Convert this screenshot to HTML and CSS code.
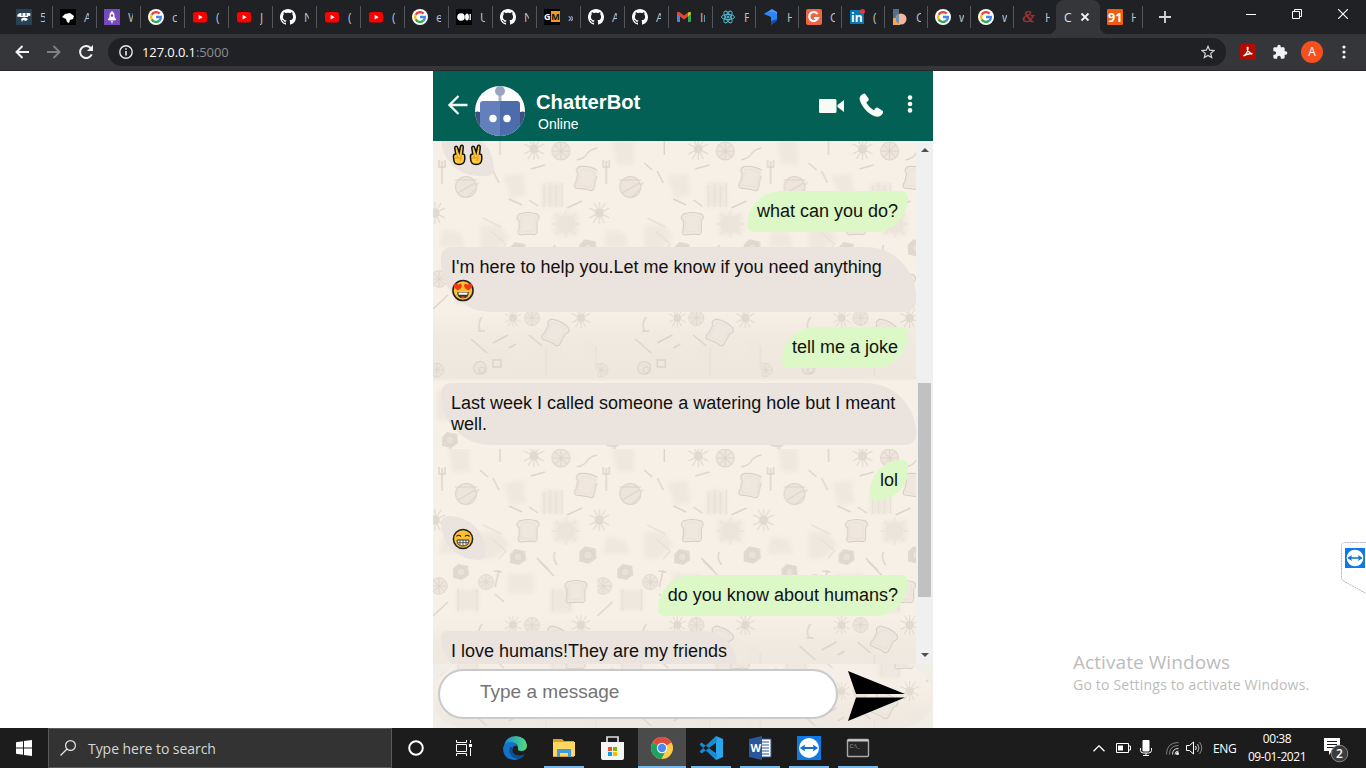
FILE: index.html
```html
<!DOCTYPE html>
<html lang="en">
<head>
<meta charset="utf-8">
<title>ChatterBot</title>
<link rel="stylesheet" href="styles.css">
</head>
<body>
<svg class="defs" width="0" height="0" aria-hidden="true">
  <defs>
    <symbol id="google" viewBox="0 0 16 16"><circle cx="8" cy="8" r="8" fill="#fff"/><g fill="none" stroke-width="2.3"><path d="M11.6 4.6A4.9 4.9 0 0 0 3.7 5.7" stroke="#ea4335"/><path d="M3.7 5.7a4.9 4.9 0 0 0 0 4.7" stroke="#fbbc05"/><path d="M3.7 10.4a4.9 4.9 0 0 0 7.6 1.3" stroke="#34a853"/><path d="M11.3 11.7A4.9 4.9 0 0 0 12.900 8H8" stroke="#4285f4"/></g></symbol>
    <symbol id="youtube" viewBox="0 0 16 16"><rect x="1" y="3" width="14" height="10.5" rx="2.5" fill="#f00"/><path d="M6.600 5.800v4.800L10.600 8.200z" fill="#fff"/></symbol>
    <symbol id="github" viewBox="0 0 16 16"><path fill="#fff" d="M8 0C3.58 0 0 3.58 0 8c0 3.54 2.29 6.53 5.47 7.59.4.07.55-.17.55-.38 0-.19-.01-.82-.01-1.49-2.01.37-2.53-.49-2.69-.94-.09-.23-.48-.94-.82-1.13-.28-.15-.68-.52-.01-.53.63-.01 1.08.58 1.23.82.72 1.21 1.87.87 2.33.66.07-.52.28-.87.51-1.07-1.78-.2-3.64-.89-3.64-3.95 0-.87.31-1.59.82-2.15-.08-.2-.36-1.02.08-2.12 0 0 .67-.21 2.2.82.64-.18 1.32-.27 2-.27.68 0 1.36.09 2 .27 1.53-1.04 2.2-.82 2.2-.82.44 1.1.16 1.92.08 2.12.51.56.82 1.27.82 2.15 0 3.07-1.87 3.75-3.65 3.95.29.25.54.73.54 1.48 0 1.07-.01 1.93-.01 2.2 0 .21.15.46.55.38A8.013 8.013 0 0016 8c0-4.42-3.58-8-8-8z"/></symbol>
    <symbol id="teamviewer" viewBox="0 0 24 24"><rect width="24" height="24" fill="#0f7ae5"/><circle cx="12" cy="12" r="10" fill="#fff"/><path d="M2.800 12l5.500-3.600-.8 2.700h9l-.8-2.700 5.500 3.600-5.500 3.600.8-2.700h-9l.8 2.700z" fill="#0d6fd2"/></symbol>
    <symbol id="sun" viewBox="-12 -12 24 24" overflow="visible"><circle r="4.500" fill="#ddd4ca"/><path d="M0-11V11M-10-5 10 5M-10 5 10-5M-5-10 5 10M-6 10 6-10" stroke="#ded6cc" stroke-width="1.200"/></symbol>
    <symbol id="lemon" viewBox="-12 -12 24 24" overflow="visible"><circle r="9" fill="#ece4db" stroke="#d9d0c6"/><path d="M-8 0H8M0-8V8M-6-6 6 6M-6 6 6-6" stroke="#d9d0c6"/></symbol>
    <symbol id="bread" viewBox="-12 -12 24 24" overflow="visible"><path d="M-9-10Q0-13 9-10Q13-7 9-3L9 8Q8 12 3 10L-8 11Q-11 10-9 5L-9-3Q-13-6-9-10Z" fill="#efe7de" stroke="#d0c7bd"/><path d="M-7-7Q0-10 7-7L6 7-7 8Z" fill="none" stroke="#e8e0d6"/></symbol>
    <symbol id="pot" viewBox="-12 -12 24 24" overflow="visible"><path d="M-8-3-3-8 7-6 8 3 1 8-8 6Z" fill="#ddd5cc"/><circle r="4" fill="#e6ded5" stroke="#d7cec5"/></symbol>
    <filter id="haze" x="-10%" y="-10%" width="120%" height="120%"><feGaussianBlur stdDeviation="2"/></filter>
    <filter id="soft" x="-10%" y="-10%" width="120%" height="120%"><feGaussianBlur stdDeviation=".35"/></filter>
    <linearGradient id="band" x2="0" y2="1"><stop stop-color="#f7f0e7"/><stop offset=".35" stop-color="#f1eae1"/><stop offset="1" stop-color="#eee7de"/></linearGradient>
    <pattern id="food" width="164.300" height="307" patternUnits="userSpaceOnUse">
      <rect width="165" height="307" fill="#f7f0e7"/>
      <rect y="170" width="165" height="68" fill="url(#band)"/>
      <rect y="238" width="165" height="2" fill="#f3ece3"/>
      <g fill="#efe8df" filter="url(#haze)">
        <path d="M15 0h22v24H20zM70 35l20-3 3 22-15 4zM109 42h20v24h-20zM47 84h20l9 13-15 14H47zM10 88l18 4 4 14H6zM23 141h23v22H23zM117 141h22v24h-22zM121 72h24v22h-24zM75 125h26v20H75zM55 208h24v20H55zM150 198h12v26h-12zM100 205h30v22h-30zM4 250h16v30H4z"/>
      </g>
      <g opacity=".85" filter="url(#soft)">
      <use href="#sun" x="89" y="-4" width="24" height="24"/>
      <use href="#lemon" x="116" y="-2" width="24" height="24"/>
      <use href="#bread" x="141" y="25" width="25" height="25" transform="rotate(12 153 37)"/>
      <g stroke="#d9d0c6" stroke-width="1.500" fill="none">
        <path d="M144 19q8-2 10-6t10-6M9 20v23M6 19v7h6v-7M98 28l14-4M47 22l8 7M60 30l6 12M67 0v14M76 58l13 6M96 59l9 6M134 67l15-7M104 110l12 12M122 104q-3 5 2 13M106 113l15 15M0 168l15-14M66 122l-4 17M61 123l8 1M62 146l9 8M49 176q-5 6-2 14M45 190h7M38 198l16 14M60 202l15-8M76 207l7-4M96 194l13 11M60 219h8v7h-8z"/>
        <path d="M113 207v28M3 222v9M59 91l14 12-7 8M50 77l18 9M111 44v22M117 42v24M123 44v22M129 42v24M25 141v22M44 141v22M120 141v22M137 143v20M163 205v24" stroke="#e7dfd6"/>
      </g>
      <g fill="#ebe3da" stroke="#d8cfc5"><circle cx="33" cy="46" r="10.500"/><path d="M22 39h22M25 52l17-10M34 56l9-8M43 45l3-4" fill="none"/><circle cx="47" cy="227" r="6.500"/><circle cx="49" cy="229" r="3"/></g>
      <use href="#sun" x="-10" y="60" width="24" height="24"/><use href="#sun" x="154.300" y="60" width="24" height="24"/>
      <use href="#bread" x="83" y="71" width="24" height="24"/>
      <circle cx="133" cy="83" r="9" fill="#ebe3da"/><path d="M133 69v28M119 83h28M123 73l20 20M123 93l20-20" stroke="#ece4db" stroke-width="2"/>
      <use href="#pot" x="73" y="97" width="24" height="24"/><use href="#pot" x="142" y="94" width="26" height="26"/>
      <use href="#pot" x="16" y="112" width="24" height="24"/>
      <use href="#lemon" x="43" y="124" width="20" height="20"/><use href="#lemon" x="-5" y="127" width="22" height="22"/>
      <use href="#bread" x="131" y="132" width="24" height="24"/>
      <use href="#sun" x="70" y="167" width="20" height="20"/><use href="#lemon" x="89" y="167" width="20" height="20"/><use href="#sun" x="137" y="166" width="22" height="22"/>
      <use href="#bread" x="110" y="179" width="25" height="25" transform="rotate(28 122 191)"/>
      <use href="#lemon" x="-5" y="220" width="18" height="18"/><use href="#pot" x="5" y="287" width="24" height="24"/>
      <use href="#sun" x="70" y="250" width="22" height="22"/><use href="#lemon" x="110" y="275" width="22" height="22"/>
      </g>
    </pattern>
  </defs>
</svg>

<header class="browser">
  <div class="tabstrip">
    <div class="tab first"><svg viewBox="0 0 16 16"><rect width="16" height="16" rx="1" fill="#2b4254"/><path d="M1 7q1-3 4-3h9q1 2 0 3-2-1-2 1H4q-1-1-2 0zM5 10q3-3 7 0l-2 2-3-1-1 2zM3 8l-1 2" fill="#fff"/><path d="M6 3v4M10 3v4" stroke="#2b4254"/></svg><span>5</span></div>
    <div class="tab"><svg viewBox="0 0 16 16"><path d="M0 0h16v16H0z"/><path d="M2 8l3-3 5-1 4 3-1 3-3 1-1 3-2-1-1-3z" fill="#fff"/></svg><span>A</span></div>
    <div class="tab"><svg viewBox="0 0 16 16"><path d="M0 0h16v16H0z" fill="#744abd"/><path d="M8 2q3 2 2.500 6l2 3-2.500.5H6L3.500 11l2-3Q5 4 8 2zM7 12h2l-1 3z" fill="#fff"/><circle cx="8" cy="6.500" r="1.200" fill="#744abd"/></svg><span>W</span></div>
    <div class="tab"><svg><use href="#google"/></svg><span>c</span></div>
    <div class="tab"><svg><use href="#youtube"/></svg><span>(</span></div>
    <div class="tab"><svg><use href="#youtube"/></svg><span>J</span></div>
    <div class="tab"><svg><use href="#github"/></svg><span>N</span></div>
    <div class="tab"><svg><use href="#youtube"/></svg><span>(</span></div>
    <div class="tab"><svg><use href="#youtube"/></svg><span>(</span></div>
    <div class="tab"><svg><use href="#google"/></svg><span>e</span></div>
    <div class="tab"><svg viewBox="0 0 16 16"><path d="M0 0h16v16H0z"/><circle cx="5" cy="8" r="3.800" fill="#fff"/><ellipse cx="11" cy="8" rx="1.900" ry="3.600" fill="#fff"/><path d="M14.200 5v6" stroke="#fff" stroke-width="1.300"/></svg><span>U</span></div>
    <div class="tab"><svg><use href="#github"/></svg><span>N</span></div>
    <div class="tab"><svg viewBox="0 0 16 16"><path d="M0 0h16v16H0z"/><path d="M7 2h9v11H7z" fill="#f79a1c"/><text x="0" y="11" font-size="9" font-weight="700" fill="#fff">G</text><text x="7.300" y="11" font-size="9" font-weight="700" fill="#111">M</text></svg><span>»</span></div>
    <div class="tab"><svg><use href="#github"/></svg><span>A</span></div>
    <div class="tab"><svg><use href="#github"/></svg><span>A</span></div>
    <div class="tab"><svg viewBox="0 0 16 16"><path d="M1 3.500h3V13H2q-1 0-1-1z" fill="#4285f4"/><path d="M12 3.500h3V12q0 1-1 1h-2z" fill="#34a853"/><path d="M1 4q1-2 3-.5L8 6.500l4-3 0 4L8 10.500 4 7.500 1 5z" fill="#ea4335"/><path d="M12 3.500q3-1.500 3 1L12 7.500z" fill="#fbbc04"/></svg><span>Ir</span></div>
    <div class="tab narrow"><svg viewBox="0 0 16 16" fill="none" stroke="#4fb8cf"><ellipse cx="8" cy="8" rx="6.500" ry="2.600"/><ellipse cx="8" cy="8" rx="6.500" ry="2.600" transform="rotate(60 8 8)"/><ellipse cx="8" cy="8" rx="6.500" ry="2.600" transform="rotate(120 8 8)"/><circle cx="8" cy="8" r="1" fill="#4fb8cf"/></svg><span>F</span></div>
    <div class="tab narrow"><svg viewBox="0 0 16 16"><path d="M1 5L9 0l5 3v8l-5-5z" fill="#4a9cff"/><path d="M1 5l3-2h7l3 2v6l-6 5V8z" fill="#2f83f2"/><path d="M14 10v2l-6 4v-4z" fill="#0d52b8"/></svg><span>H</span></div>
    <div class="tab narrow"><svg viewBox="0 0 16 16"><rect width="16" height="16" rx="2" fill="#ee6544"/><path d="M11.500 5A4.500 4.500 0 1 0 12 9H8" fill="none" stroke="#fff" stroke-width="2.200"/></svg><span>C</span></div>
    <div class="tab narrow"><svg viewBox="0 0 16 16"><rect x="1" y="1" width="14" height="14" fill="#0877b5"/><text x="2" y="12.500" font-size="12" font-weight="700" fill="#fff">in</text><circle cx="13.500" cy="2.500" r="2.500" fill="#e53935"/></svg><span>(</span></div>
    <div class="tab narrow"><svg viewBox="0 0 16 16"><path d="M1 0h6v9H1z" fill="#56708a"/><path d="M1 9h7v7H1z" fill="#f6a942"/><circle cx="9" cy="10" r="5.500" fill="#f3b7a0"/><path d="M7 5A5.500 5.500 0 0 0 7 15z" fill="#6f92b5"/></svg><span>C</span></div>
    <div class="tab narrow"><svg><use href="#google"/></svg><span>w</span></div>
    <div class="tab narrow"><svg><use href="#google"/></svg><span>w</span></div>
    <div class="tab narrow last"><svg viewBox="0 0 16 16"><text x="1" y="13" class="amp" font-size="16" fill="#9b3138" stroke="#9b3138" stroke-width=".5">&amp;</text></svg><span>H</span></div>
    <div class="tab active"><span>C</span><svg class="x" viewBox="0 0 10 10"><path d="M1.500 1.500l7 7m0-7l-7 7" stroke="#f1f1f1" stroke-width="1.800"/></svg></div>
    <div class="tab narrow after"><svg viewBox="0 0 16 16"><rect width="16" height="16" rx="1" fill="#f05d0c"/><text x="1" y="12.500" font-size="12.500" font-weight="700" fill="#fff">91</text></svg><span>H</span></div>
    <svg class="plus" viewBox="0 0 12 12"><path d="M6 0v12M0 6h12" stroke="#d5d6d8" stroke-width="1.800"/></svg>
    <div class="window-buttons">
      <svg viewBox="0 0 10 10"><path d="M0 5.500h10" stroke="#fff"/></svg>
      <svg viewBox="0 0 10 10" fill="none" stroke="#fff"><path d="M.5 2.500h7v7h-7zM2.500 2.500v-2h7v7h-2"/></svg>
      <svg viewBox="0 0 10 10"><path d="M0 0l10 10M10 0L0 10" stroke="#fff" stroke-width="1.100"/></svg>
    </div>
  </div>
  <div class="toolbar">
    <svg class="nav" viewBox="0 0 14 14" fill="none" stroke="#f1f3f4" stroke-width="1.900"><path d="M14 7H1.500M7.500 1L1.500 7l6 6"/></svg>
    <svg class="nav" viewBox="0 0 14 14" fill="none" stroke="#7e8084" stroke-width="1.900"><path d="M0 7h12.500M6.500 1l6 6-6 6"/></svg>
    <svg class="nav" viewBox="0 0 14 14" fill="none" stroke="#f1f3f4" stroke-width="2"><path d="M12.700 9.300A6 6 0 1 1 11.600 3"/><path d="M14 0v6H8z" fill="#f1f3f4" stroke="none"/></svg>
    <div class="omnibox">
      <svg class="info" viewBox="0 0 14 14"><circle cx="7" cy="7" r="6.200" fill="none" stroke="#e8eaed" stroke-width="1.400"/><path d="M7 6v4.500M7 3.300v1.500" stroke="#e8eaed" stroke-width="1.600"/></svg>
      <span class="url">127.0.0.1<i>:5000</i></span>
      <svg class="star" viewBox="0 0 14 14"><path d="M7 1.300l1.700 3.900 4.200.4-3.200 2.800 1 4.200L7 10.400l-3.700 2.200 1-4.200L1.100 5.600l4.200-.4z" fill="none" stroke="#d2d4d7" stroke-width="1.200"/></svg>
    </div>
    <svg class="pdf" viewBox="0 0 16 16"><rect width="16" height="16" rx="2" fill="#b30b00"/><path d="M3.500 12Q8 9 8 4q0-1-.8-.5Q7 8 12.500 10 9 9 3.500 12" fill="none" stroke="#fff" stroke-width="1.300"/></svg>
    <svg class="puzzle" viewBox="0 0 24 24"><path fill="#f1f3f4" d="M20.500 11H19V7c0-1.100-.9-2-2-2h-4V3.500a2.500 2.500 0 0 0-5 0V5H4c-1.100 0-2 .9-2 2v3.800h1.500a2.700 2.700 0 0 1 0 5.400H2V20c0 1.100.9 2 2 2h3.800v-1.500a2.700 2.700 0 0 1 5.400 0V22H17c1.100 0 2-.9 2-2v-4h1.500a2.500 2.500 0 0 0 0-5z"/></svg>
    <span class="profile">A</span>
    <svg class="kebab" viewBox="0 0 4 14" fill="#f1f3f4"><circle cx="2" cy="2" r="1.600"/><circle cx="2" cy="7" r="1.600"/><circle cx="2" cy="12" r="1.600"/></svg>
  </div>
</header>

<main class="page">
  <section class="chat">
    <div class="chat-head">
      <svg class="back" viewBox="0 0 20 20" fill="none" stroke="#eef7f0" stroke-width="2.300"><path d="M19.500 10H1.500M10.500 1l-9 9 9 9"/></svg>
      <svg class="avatar" viewBox="0 0 50 50"><clipPath id="round"><circle cx="25" cy="25" r="25"/></clipPath><g clip-path="url(#round)"><path d="M0 0h50v50H0z" fill="#fff"/><path d="M23.500 8h3v9h-3z" fill="#aab3c9"/><circle cx="25" cy="5" r="5" fill="#99a5c0"/><path d="M0 26q2-1 5 0v18H0zM45 26q3-1 5 0v18h-5z" fill="#3c4f7f"/><path d="M8 15h17v35H5V18q0-3 3-3z" fill="#6380bc"/><path d="M25 15h17q3 0 3 3v32H25z" fill="#4c6cac"/><circle cx="18" cy="32.500" r="3.700" fill="#fff"/><circle cx="32" cy="32.500" r="3.700" fill="#fff"/></g></svg>
      <div class="who"><h1>ChatterBot</h1><p>Online</p></div>
      <svg class="video" viewBox="0 0 25 14"><path fill="#f7fdf6" d="M1 0h15q1.500 0 1.500 1.500v11q0 1.500-1.500 1.500H1q-1 0-1-1V1q0-1 1-1zM18.500 6L25 1v12l-6.500-5z"/></svg>
      <svg class="phone" viewBox="0 0 24 24"><path fill="#f7fdf6" d="M4.500.8Q5.500 0 6.300 1L9.500 5.500q.8 1.500-.5 2.500L7.800 9q-.5.600 0 1.500 2.500 4 6.200 6.200.8.500 1.500-.2l1.200-1.500q1-1 2.200-.2l4.600 3q1.300.8.600 2-2 4-6 3.900-5-.3-10.500-5.700T.5 6Q.4 3 4.500.8z"/></svg>
      <svg class="menu" viewBox="0 0 6 18" fill="#f7fdf6"><circle cx="3" cy="2.600" r="2.300"/><circle cx="3" cy="9" r="2.300"/><circle cx="3" cy="15.400" r="2.300"/></svg>
    </div>
    <div class="conversation">
      <svg class="wallpaper"><rect width="100%" height="100%" fill="url(#food)"/></svg>
      <div class="messages">
        <div class="bubble in peace"><svg viewBox="0 0 16 22"><path id="hand" d="M4.500 10L3.500 4q0-1.800 1.300-1.800T6.500 4L8 8.500l1.200-6q.4-1.500 1.700-1.200t1.100 2L11.300 10q2.200-.2 2.200 2.500v3q-.5 5-5.500 5-5 0-5.500-4.500l-.3-3.500q0-2.500 2.300-2.500z" fill="#ffc83d" stroke="#111" stroke-width="1.500"/><path id="folds" d="M3.500 14H8q2 0 2-3M6 11v3M8.500 17q0-3 2.500-3" fill="none" stroke="#e08f10" stroke-width=".9"/></svg><svg viewBox="0 0 16 22"><use href="#hand"/><use href="#folds"/></svg></div>
        <div class="bubble out">what can you do?</div>
        <div class="bubble in wide love">I'm here to help you.Let me know if you need anything <svg viewBox="0 0 22 22"><circle cx="11" cy="11" r="9.600" fill="#ffc12f" stroke="#222" stroke-width="1.500"/><path d="M6 11Q0 7 2.500 5 5 3.500 6.500 5.500 9 3.500 10 6 10 9 6 11zM16 11q-4-2-4-5 1-2.500 3.500-.5Q17 3.500 19.500 5 22 7 16 11z" fill="#f03a17"/><path d="M5.500 12.500h11q0 6-5.500 6t-5.500-6z" fill="#333"/><path d="M6.500 13h9l-.5 2H7z" fill="#fff"/><path d="M8.500 17.500q2.500-2 5 0-2.500 1.500-5 0z" fill="#f03a17"/></svg></div>
        <div class="bubble out">tell me a joke</div>
        <div class="bubble in wide">Last week I called someone a watering hole but I meant well.</div>
        <div class="bubble out">lol</div>
        <div class="bubble in grin"><svg viewBox="0 0 22 22"><circle cx="11" cy="11" r="9.600" fill="#ffc12f" stroke="#222" stroke-width="1.500"/><path d="M4.500 8.500q2-2.500 4.500 0M13 8.500q2-2.500 4.500 0" fill="none" stroke="#222" stroke-width="1.200"/><path d="M5 12h12q0 6-6 6t-6-6z" fill="#fff" stroke="#333"/><path d="M5.500 14.700h11M8 12v5M11 12v6M14 12v5" stroke="#333" stroke-width=".8"/></svg></div>
        <div class="bubble out">do you know about humans?</div>
        <div class="bubble in">I love humans!They are my friends</div>
      </div>
      <div class="scrollbar"><i class="up"></i><i class="thumb"></i><i class="down"></i></div>
    </div>
    <form class="composer">
      <svg class="wallpaper" viewBox="0 150 500 64"><rect y="150" width="500" height="64" fill="url(#food)"/></svg>
      <input type="text" placeholder="Type a message" aria-label="Message">
      <svg class="send" viewBox="0 0 58 50"><path d="M0 0l57 23H8zM0 50l57-23.500H8z"/></svg>
    </form>
  </section>
  <aside class="activate"><strong>Activate Windows</strong><span>Go to Settings to activate Windows.</span></aside>
  <svg class="tv-flap" viewBox="0 0 26 54"><path d="M26 .5H4q-3.500 0-3.500 4V35q0 3 3 4.500L26 52" fill="#fff" stroke="#b4b6c4" stroke-dasharray="2 .6"/><svg x="4" y="6" width="20" height="20"><use href="#teamviewer"/></svg></svg>
</main>

<footer class="taskbar">
  <div class="start"><svg viewBox="0 0 16 16" fill="#fff"><path d="M0 2.200l7-1v6.300H0zM8 1l8-1v7.500H8zM0 8.500h7v6.300l-7-1zM8 8.500h8V16l-8-1z"/></svg></div>
  <div class="search"><svg viewBox="0 0 16 16" fill="none" stroke="#e6e6e6" stroke-width="1.200"><circle cx="10.500" cy="5.500" r="4.900"/><path d="M7 9L.5 15.500"/></svg><span>Type here to search</span></div>
  <div class="sys"><svg viewBox="0 0 16 16"><circle cx="8" cy="8" r="6.800" fill="none" stroke="#fff" stroke-width="2"/></svg></div>
  <div class="sys"><svg viewBox="0 0 16 16" fill="none" stroke="#fff"><path d="M.5 0v2.500h10V0M.5 16v-2.500h10V16M.5 4.500h10v7H.5zM14.500 0v3M14.500 8v8"/><path d="M13 4h3v3h-3z" fill="#fff" stroke="none"/></svg></div>
  <div class="apps">
    <div class="app"><svg viewBox="0 0 24 24"><defs><linearGradient id="edge"><stop stop-color="#168dda"/><stop offset="1" stop-color="#55dc7c"/></linearGradient></defs><path d="M1 10Q3 0 13 0q10 1 11 9 0 6-6 6-4 0-3-3 0-5-6-5-5 0-8 3z" fill="url(#edge)"/><path d="M0 12Q2 5 9 6q5 1 6 6-1-3-4-2-4 4 0 8 5 4 11 0-5 6-11 6Q0 23 0 12z" fill="#1273c6"/><path d="M7 11q-3 9 7 12 5 0 8-5-5 3-11 0-3-3-1-7z" fill="#0c4d98"/></svg></div>
    <div class="app open"><svg viewBox="0 0 24 24"><path d="M1 3h9l2 2h10v16H1z" fill="#e2a11c"/><path d="M1 6h22v14H1z" fill="#ffd75e"/><path d="M5 13h14v8h-3v-4H8v4H5z" fill="#3f9bdc"/></svg></div>
    <div class="app"><svg viewBox="0 0 24 24"><path d="M6 8V1h11v7" fill="none" stroke="#ddd" stroke-width="1.700"/><path d="M0 6h23v16q0 2-2 2H2q-2 0-2-2z" fill="#f5f5f5"/><path d="M7 11h4v4H7z" fill="#f25022"/><path d="M12 11h4v4h-4z" fill="#7fba00"/><path d="M7 16h4v4H7z" fill="#00a4ef"/><path d="M12 16h4v4h-4z" fill="#ffb900"/></svg></div>
    <div class="app open current"><svg viewBox="0 0 24 24"><circle cx="12" cy="12" r="11" fill="#ffcd41"/><path d="M12 12L2.500 6.500a11 11 0 0 1 19 0z" fill="#dd4b3e"/><path d="M2.500 6.500A11 11 0 0 0 11.500 23L16 14l-4-2z" fill="#1da260"/><circle cx="12" cy="12" r="5.200" fill="#fff"/><circle cx="12" cy="12" r="4.200" fill="#4c8bf5"/></svg></div>
    <div class="app open"><svg viewBox="0 0 24 24"><path d="M17 0l7 3v18l-7 3z" fill="#29a6ee"/><path d="M17 0L.5 15.500l2 2L18 6zM17 24L.5 8.500l2-2L18 18z" fill="#168bd3"/></svg></div>
    <div class="app open"><svg viewBox="0 0 24 24"><path d="M13 3h10v18H13z" fill="#fff" stroke="#2b579a"/><path d="M14 6h7M14 9h7M14 12h7M14 15h7M14 18h7" stroke="#2b579a"/><path d="M1 3l13-3v24L1 21z" fill="#2b579a"/><text x="2.500" y="16" font-size="11" font-weight="700" fill="#fff">W</text></svg></div>
    <div class="app open"><svg><use href="#teamviewer"/></svg></div>
    <div class="app open"><svg viewBox="0 0 24 24"><rect x="1.500" y="3.500" width="21" height="17" rx="1" fill="#242424" stroke="#a9a9a9" stroke-width="1.400"/><path d="M2 4.500h20" stroke="#ccc" stroke-width="2"/><text x="3.500" y="12" font-size="6" fill="#aaa">C:\_</text></svg></div>
  </div>
  <div class="tray">
    <svg class="chev" viewBox="0 0 12 7" fill="none" stroke="#fff" stroke-width="1.300"><path d="M.5 6.300L6 .8l5.500 5.500"/></svg>
    <svg class="battery" viewBox="0 0 15 10"><path d="M.5.5h12v9H.5zM13 3h1.500v4H13" fill="none" stroke="#fff"/><path d="M2 2.500h5v5H2z" fill="#fff"/></svg>
    <svg class="mic" viewBox="0 0 12 16"><rect x="2.500" width="7" height="11.500" rx="1" fill="#fff"/><path d="M.5 8v2.500q0 2.500 3 2.500h5q3 0 3-2.500V8M6 13v2.500M3 15.500h6" fill="none" stroke="#fff"/></svg>
    <svg class="wifi" viewBox="0 0 13 13" fill="none"><path d="M.5 12.500q0-12 12-12M3.500 12.500q0-9 9-9" stroke="#828282"/><path d="M6.500 12.500q0-6 6-6M9 12.500Q9 9 12.500 9" stroke="#ddd"/><circle cx="11.500" cy="11.500" r="1.500" fill="#fff"/></svg>
    <svg class="sound" viewBox="0 0 17 14" fill="none" stroke="#fff"><path d="M.5 4.500h3L7.500 1v12l-4-3.500h-3zM9.500 5q1.500 2 0 4"/><path d="M11.500 3q3 4 0 8" stroke="#bbb"/><path d="M13.500 1q4.500 6 0 12" stroke="#888"/></svg>
    <span class="lang">ENG</span>
    <div class="clock"><span>00:38</span><span>09-01-2021</span></div>
    <svg class="notice" viewBox="0 0 25 25"><path d="M0 0h16v13H8l-3 4v-4H0z" fill="#fff"/><path d="M3 3.500h10M3 6.500h10M3 9.500h7" stroke="#1c1c1c"/><circle cx="15.500" cy="15.500" r="8.300" fill="#3c3c3c" stroke="#888"/><text x="12" y="20" font-size="12" font-weight="600" fill="#fff">2</text></svg>
  </div>
</footer>
</body>
</html>
```
FILE: styles.css
```css
* { box-sizing: border-box; }
html, body { margin: 0; }
body {
  width: 1366px; height: 768px; overflow: hidden;
  display: flex; flex-direction: column;
  background: #fff;
  font-family: "Open Sans", "Noto Sans", sans-serif;
}
svg { display: block; flex: none; }
.defs { position: absolute; }

/* Browser chrome */
.browser { flex: none; height: 71px; background: #35363a; border-bottom: 1px solid #2a2829; }
.tabstrip { display: flex; height: 34px; background: #202124; font-size: 12px; color: #b4c2ce; }
.tab { position: relative; display: flex; align-items: center; gap: 8px; width: 44px; padding-left: 7px; border-right: 1px solid #55575b; border-image: linear-gradient(transparent 7px, #55575b 7px 27px, transparent 27px) 1; flex: none; }
.tab.first { width: 53px; padding-left: 16px; }
.tab.narrow { width: 43px; }
.tab.narrow.last { border: 0; width: 42px; }
.tab > svg { width: 16px; height: 16px; }
.tab span { width: 5px; overflow: hidden; white-space: nowrap; }
.tab.active { background: #35363a; border: 0; border-radius: 8px 8px 0 0; padding-left: 8px; gap: 8px; color: #dfe5ea; }
.tab.active::before, .tab.active::after { content: ""; position: absolute; bottom: 0; width: 8px; height: 8px; }
.tab.active::before { left: -8px; background: radial-gradient(circle at 0 0, #202124 8px, #35363a 8.500px); }
.tab.active::after { right: -8px; background: radial-gradient(circle at 100% 0, #202124 8px, #35363a 8.500px); }
.tab.active span { width: 8px; }
.tab .x { width: 10px; height: 10px; }
.amp { font-family: "Liberation Serif", serif; font-style: italic; }
.plus { width: 12px; height: 12px; margin: 11px 0 0 16px; }
.window-buttons { display: flex; gap: 36px; margin: 9px 18px 0 auto; }
.window-buttons svg { width: 10px; height: 10px; }
.toolbar { display: flex; align-items: center; height: 36px; padding-left: 15px; }
.nav { width: 14px; height: 14px; margin-right: 18px; }
.omnibox { display: flex; align-items: center; width: 1118px; height: 28px; padding: 0 11px; margin-left: -3px; border-radius: 14px; background: #202124; }
.info { width: 14px; height: 14px; margin-right: 9px; }
.url { font-size: 13px; letter-spacing: -.1px; color: #fff; }
.url i { font-style: normal; color: #8b8e92; }
.star { width: 14px; height: 14px; margin-left: auto; }
.pdf { width: 16px; height: 16px; margin-left: 14px; }
.puzzle { width: 16px; height: 16px; margin-left: 16px; }
.profile { width: 22px; height: 22px; margin-left: 13px; border-radius: 50%; background: #f4511e; color: #fff; font-size: 12px; line-height: 22px; text-align: center; }
.kebab { width: 4px; height: 14px; margin-left: 19px; }

/* Chat page */
.page { position: relative; flex: 1; min-height: 0; display: flex; justify-content: center; font-family: "Liberation Sans", Arial, sans-serif; }
.chat { display: flex; flex-direction: column; width: 500px; height: 657px; }
.chat-head { display: flex; align-items: flex-start; height: 70px; background: #036055; color: #fff; padding: 15px 20px 0 15px; }
.back { width: 20px; height: 20px; margin-top: 9px; }
.avatar { width: 50px; height: 50px; margin-left: 7px; }
.who { margin: 4px auto 0 11px; }
.who h1 { margin: 0; font-size: 20.200px; line-height: 24px; }
.who p { margin: 0 0 0 2px; font-size: 14px; line-height: 20px; }
.video { width: 25px; height: 14px; margin-top: 13px; }
.phone { width: 24px; height: 24px; margin: 7px 24px 0 15px; }
.menu { width: 6px; height: 18px; margin-top: 9px; }
.conversation { position: relative; display: flex; height: 523px; overflow: hidden; }
.wallpaper { position: absolute; inset: 0; width: 100%; height: 100%; }
.messages { position: relative; flex: 1; display: flex; flex-direction: column; align-items: flex-start; gap: 15px; height: 523px; overflow: hidden; padding-left: 8px; }
.bubble { flex: none; padding: 10px; color: #111; font-size: 18px; line-height: 21px; white-space: nowrap; }
.in { background: #ebe4de; border-radius: 10px 50px 10px 50px; }
.out { align-self: flex-end; margin-right: 8px; background: #dcf8c6; border-radius: 50px 10px 50px 10px; }
.wide { width: 475px; height: 62px; white-space: normal; }
.peace { display: flex; width: 53px; height: 45px; margin-top: -10px; padding-top: 13px; }
.peace svg { width: 16.500px; height: 22px; }
.love { height: 65px; }
.love svg { width: 24px; height: 23px; margin-top: 1px; }
.grin { width: 45px; height: 44px; padding-top: 12px; }
.grin svg { width: 24px; height: 22px; }
.scrollbar { display: flex; flex-direction: column; align-items: center; position: relative; width: 17px; height: 523px; background: #f0f0f0; }
.up, .down { border: 4px solid transparent; }
.up { border-bottom-color: #505050; margin-top: 3px; }
.thumb { width: 13px; height: 214px; background: #c1c1c1; margin: 231px 0 auto; }
.down { border-top-color: #505050; margin-bottom: 3px; }
.composer { position: relative; display: flex; align-items: flex-start; height: 64px; padding: 5px; background: #efeee7; }
.composer .wallpaper { border-radius: 32px; opacity: .85; }
.composer input { position: relative; width: 400px; height: 50px; padding: 0 40px 5px; border: 2px solid #c9cacc; border-radius: 25px; background: #fff; font: 19px "Liberation Sans", Arial, sans-serif; }
.composer input::placeholder { color: #757575; opacity: 1; }
.send { position: relative; width: 58px; height: 50px; margin: 2px 0 0 10px; }
.activate { position: absolute; left: 1073px; top: 579px; display: flex; flex-direction: column; font-family: "Open Sans", sans-serif; color: #bcbcbc; white-space: nowrap; }
.activate strong { font-weight: 400; font-size: 19px; line-height: 25px; letter-spacing: .07px; }
.activate span { font-size: 14px; line-height: 20px; letter-spacing: .2px; }
.tv-flap { position: absolute; right: -1px; top: 471px; width: 26px; height: 54px; }

/* Taskbar */
.taskbar { display: flex; flex: none; height: 40px; background: #1c1c1c; color: #fff; }
.start, .sys { display: grid; place-items: center; width: 48px; height: 40px; }
.start svg, .sys svg { width: 16px; height: 16px; }
.search { display: flex; align-items: center; width: 344px; padding-left: 11px; gap: 12px; background: #333; border: 1px solid #5a5a5a; color: #d6d6d6; font-size: 14px; letter-spacing: -.05px; }
.search svg { width: 16px; height: 16px; }
.apps { display: flex; gap: 1px; margin-left: 3px; }
.app { display: grid; place-items: center; width: 48px; height: 40px; }
.app svg { width: 24px; height: 24px; }
.open { background: linear-gradient(#76b9ed, #76b9ed) center bottom / 40px 2px no-repeat; }
.current { background-color: #4b4b4b; background-size: 48px 2px; }
.tray { display: flex; align-items: center; margin-left: auto; width: 273px; font-size: 12px; }
.chev { width: 12px; height: 7px; }
.battery { width: 15px; height: 10px; margin-left: 11px; }
.mic { width: 12px; height: 16px; margin-left: 9px; }
.wifi { width: 13px; height: 13px; margin-left: 14px; }
.sound { width: 17px; height: 14px; margin-left: 7px; }
.lang { margin-left: 10px; width: 26px; letter-spacing: -.4px; }
.clock { display: flex; flex-direction: column; align-items: center; width: 60px; margin-left: 8px; line-height: 18px; letter-spacing: -.45px; white-space: nowrap; }
.notice { width: 25px; height: 25px; margin: 4px 0 0 17px; }
```
